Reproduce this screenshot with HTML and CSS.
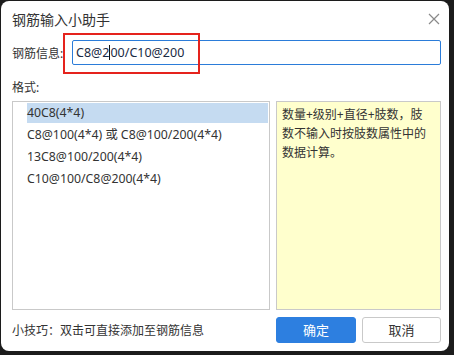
FILE: index.html
```html
<!DOCTYPE html>
<html lang="zh-CN">
<head>
<meta charset="utf-8">
<title>钢筋输入小助手</title>
<link rel="stylesheet" href="styles.css">
</head>
<body>
<div class="dialog">
  <div class="titlebar">
    <span class="title">钢筋输入小助手</span>
    <svg class="close" width="12" height="12" viewBox="0 0 12 12"><path d="M1 1 L11 11 M11 1 L1 11" stroke="#8a8a8a" stroke-width="1.2" fill="none"/></svg>
  </div>
  <div class="field-row">
    <label class="field-label">钢筋信息:</label>
    <div class="input"><span>C8@2</span><span class="caret"></span><span>00/C10@200</span></div>
  </div>
  <div class="fmt-label">格式:</div>
  <div class="panels">
    <ul class="list">
      <li class="item selected">40C8(4*4)</li>
      <li class="item">C8@100(4*4) 或 C8@100/200(4*4)</li>
      <li class="item">13C8@100/200(4*4)</li>
      <li class="item">C10@100/C8@200(4*4)</li>
    </ul>
    <div class="note">数量+级别+直径+肢数，肢数不输入时按肢数属性中的数据计算。</div>
  </div>
  <div class="footer">
    <span class="tip">小技巧：双击可直接添加至钢筋信息</span>
    <div class="buttons">
      <button class="btn primary">确定</button>
      <button class="btn">取消</button>
    </div>
  </div>
  <div class="highlight-box"></div>
</div>
</body>
</html>
```
FILE: styles.css
```css
html, body {
  margin: 0;
  padding: 0;
  background: #1c1c1c;
  width: 454px;
  height: 355px;
  overflow: hidden;
}
body {
  font-family: "Noto Sans", "Noto Sans CJK SC", sans-serif;
  font-size: 12px;
  color: #333;
}
.dialog {
  position: relative;
  width: 448px;
  height: 350px;
  margin: 1px 0 0 1px;
  background: #fff;
  border-radius: 8px;
  box-sizing: border-box;
  padding: 0 8px 0 11px;
  display: flex;
  flex-direction: column;
}
.titlebar {
  height: 36px;
  display: flex;
  align-items: center;
  justify-content: space-between;
}
.title {
  font-size: 14px;
  color: #333;
}
.close {
  margin-right: 1px;
}
.field-row {
  margin-top: 3px;
  display: flex;
  align-items: center;
  height: 25px;
}
.field-label {
  width: 60px;
  flex: none;
  font-size: 12px;
}
.input {
  flex: 1;
  height: 25px;
  box-sizing: border-box;
  border: 1px solid #2b7cd9;
  border-radius: 2px;
  padding: 0 3px;
  display: flex;
  align-items: center;
  font-size: 12.5px;
  color: #1a2a44;
}
.caret {
  display: inline-block;
  width: 1px;
  height: 15px;
  background: #111;
}
.fmt-label {
  margin-top: 14px;
  height: 18px;
  line-height: 18px;
  margin-bottom: 4px;
}
.panels {
  display: flex;
  gap: 6px;
  height: 209px;
}
.list {
  list-style: none;
  margin: 0;
  padding: 0 1px;
  width: 258px;
  flex: none;
  box-sizing: border-box;
  border: 1px solid #c9c9c9;
}
.item {
  height: 22px;
  padding: 1px 0 1px 13px;
  box-sizing: border-box;
  line-height: 20px;
  font-size: 12.3px;
  white-space: nowrap;
}
.item.selected {
  background: #c5dbf1;
  background-clip: content-box;
}
.note {
  flex: 1;
  box-sizing: border-box;
  border: 1px solid #c9c9c9;
  background: #ffffcd;
  padding: 3px 8px 3px 5px;
  line-height: 19px;
}
.footer {
  flex: 1;
  display: flex;
  align-items: center;
  justify-content: space-between;
  padding-bottom: 2px;
}
.buttons {
  display: flex;
  gap: 6px;
}
.btn {
  width: 79px;
  height: 26px;
  box-sizing: border-box;
  border: 1px solid #c9c9c9;
  border-radius: 3px;
  background: #fff;
  font-family: "Noto Sans", "Noto Sans CJK SC", sans-serif;
  font-size: 13px;
  color: #333;
  padding: 0;
}
.btn.primary {
  width: 80px;
  background: #2d7fe0;
  border-color: #2d7fe0;
  color: #fff;
}
.highlight-box {
  position: absolute;
  left: 62px;
  top: 32px;
  width: 137px;
  height: 41px;
  box-sizing: border-box;
  border: 2px solid #e5231d;
}
```
